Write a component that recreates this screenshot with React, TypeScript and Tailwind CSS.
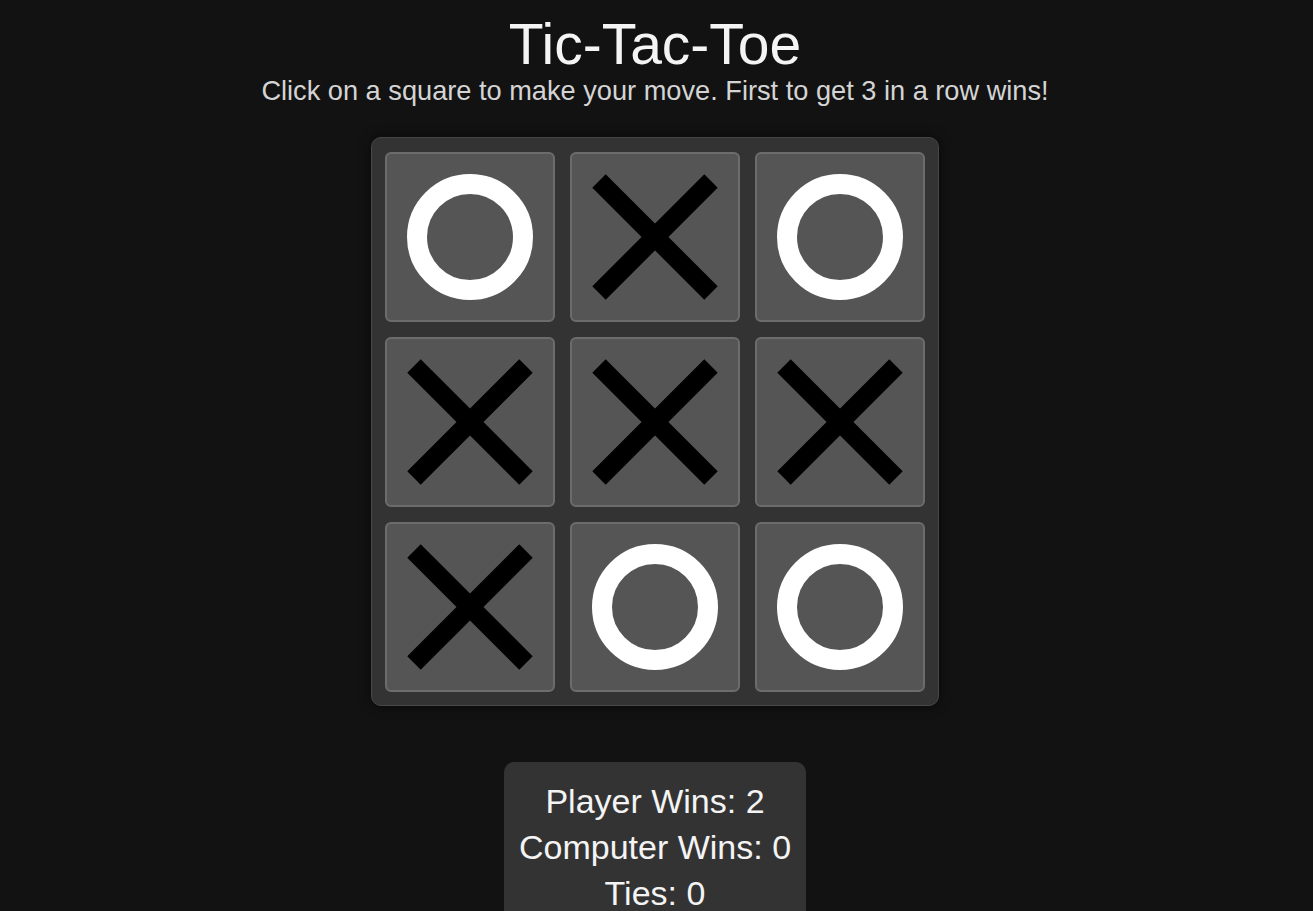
import React from "react";

type Mark = "X" | "O" | null;

const board: Mark[] = ["O", "X", "O", "X", "X", "X", "X", "O", "O"];

function Cell({ mark }: { mark: Mark }) {
  return (
    <div className="w-[170px] h-[170px] bg-[#555555] border-2 border-[#6c6c6c] rounded-[6px] flex items-center justify-center">
      <svg width="166" height="166" viewBox="0 0 166 166">
        {mark === "X" && (
          <g stroke="#000" strokeWidth="19" strokeLinecap="butt">
            <line x1="27" y1="27" x2="139" y2="139" />
            <line x1="139" y1="27" x2="27" y2="139" />
          </g>
        )}
        {mark === "O" && (
          <circle cx="83" cy="83" r="53" fill="none" stroke="#fff" strokeWidth="20" />
        )}
      </svg>
    </div>
  );
}

export default function App() {
  return (
    <div className="min-h-screen bg-[#121212] flex flex-col items-center pt-[12px] pr-[3px] font-['Liberation_Sans',Arial,sans-serif]">
      <h1 className="text-[57px] leading-[64px] text-[#f4f4f4]">Tic-Tac-Toe</h1>
      <p className="text-[27.2px] leading-[29px] text-[#d4d4d4]">
        Click on a square to make your move. First to get 3 in a row wins!
      </p>

      {/* Board */}
      <div className="mt-[32px] grid grid-cols-3 gap-[15px] px-[13px] pt-[14px] pb-[13px] bg-[#333333] border border-[#474747] rounded-[10px] shadow-[0_0_12px_rgba(0,0,0,0.6)]">
        {board.map((m, i) => (
          <Cell key={i} mark={m} />
        ))}
      </div>

      {/* Score */}
      <div className="mt-[56px] w-[302px] bg-[#333333] rounded-[10px] pt-[16px] pb-[10px] text-center text-[34px] leading-[46px] text-[#f4f4f4]">
        <div>Player Wins: 2</div>
        <div>Computer Wins: 0</div>
        <div>Ties: 0</div>
      </div>
    </div>
  );
}
